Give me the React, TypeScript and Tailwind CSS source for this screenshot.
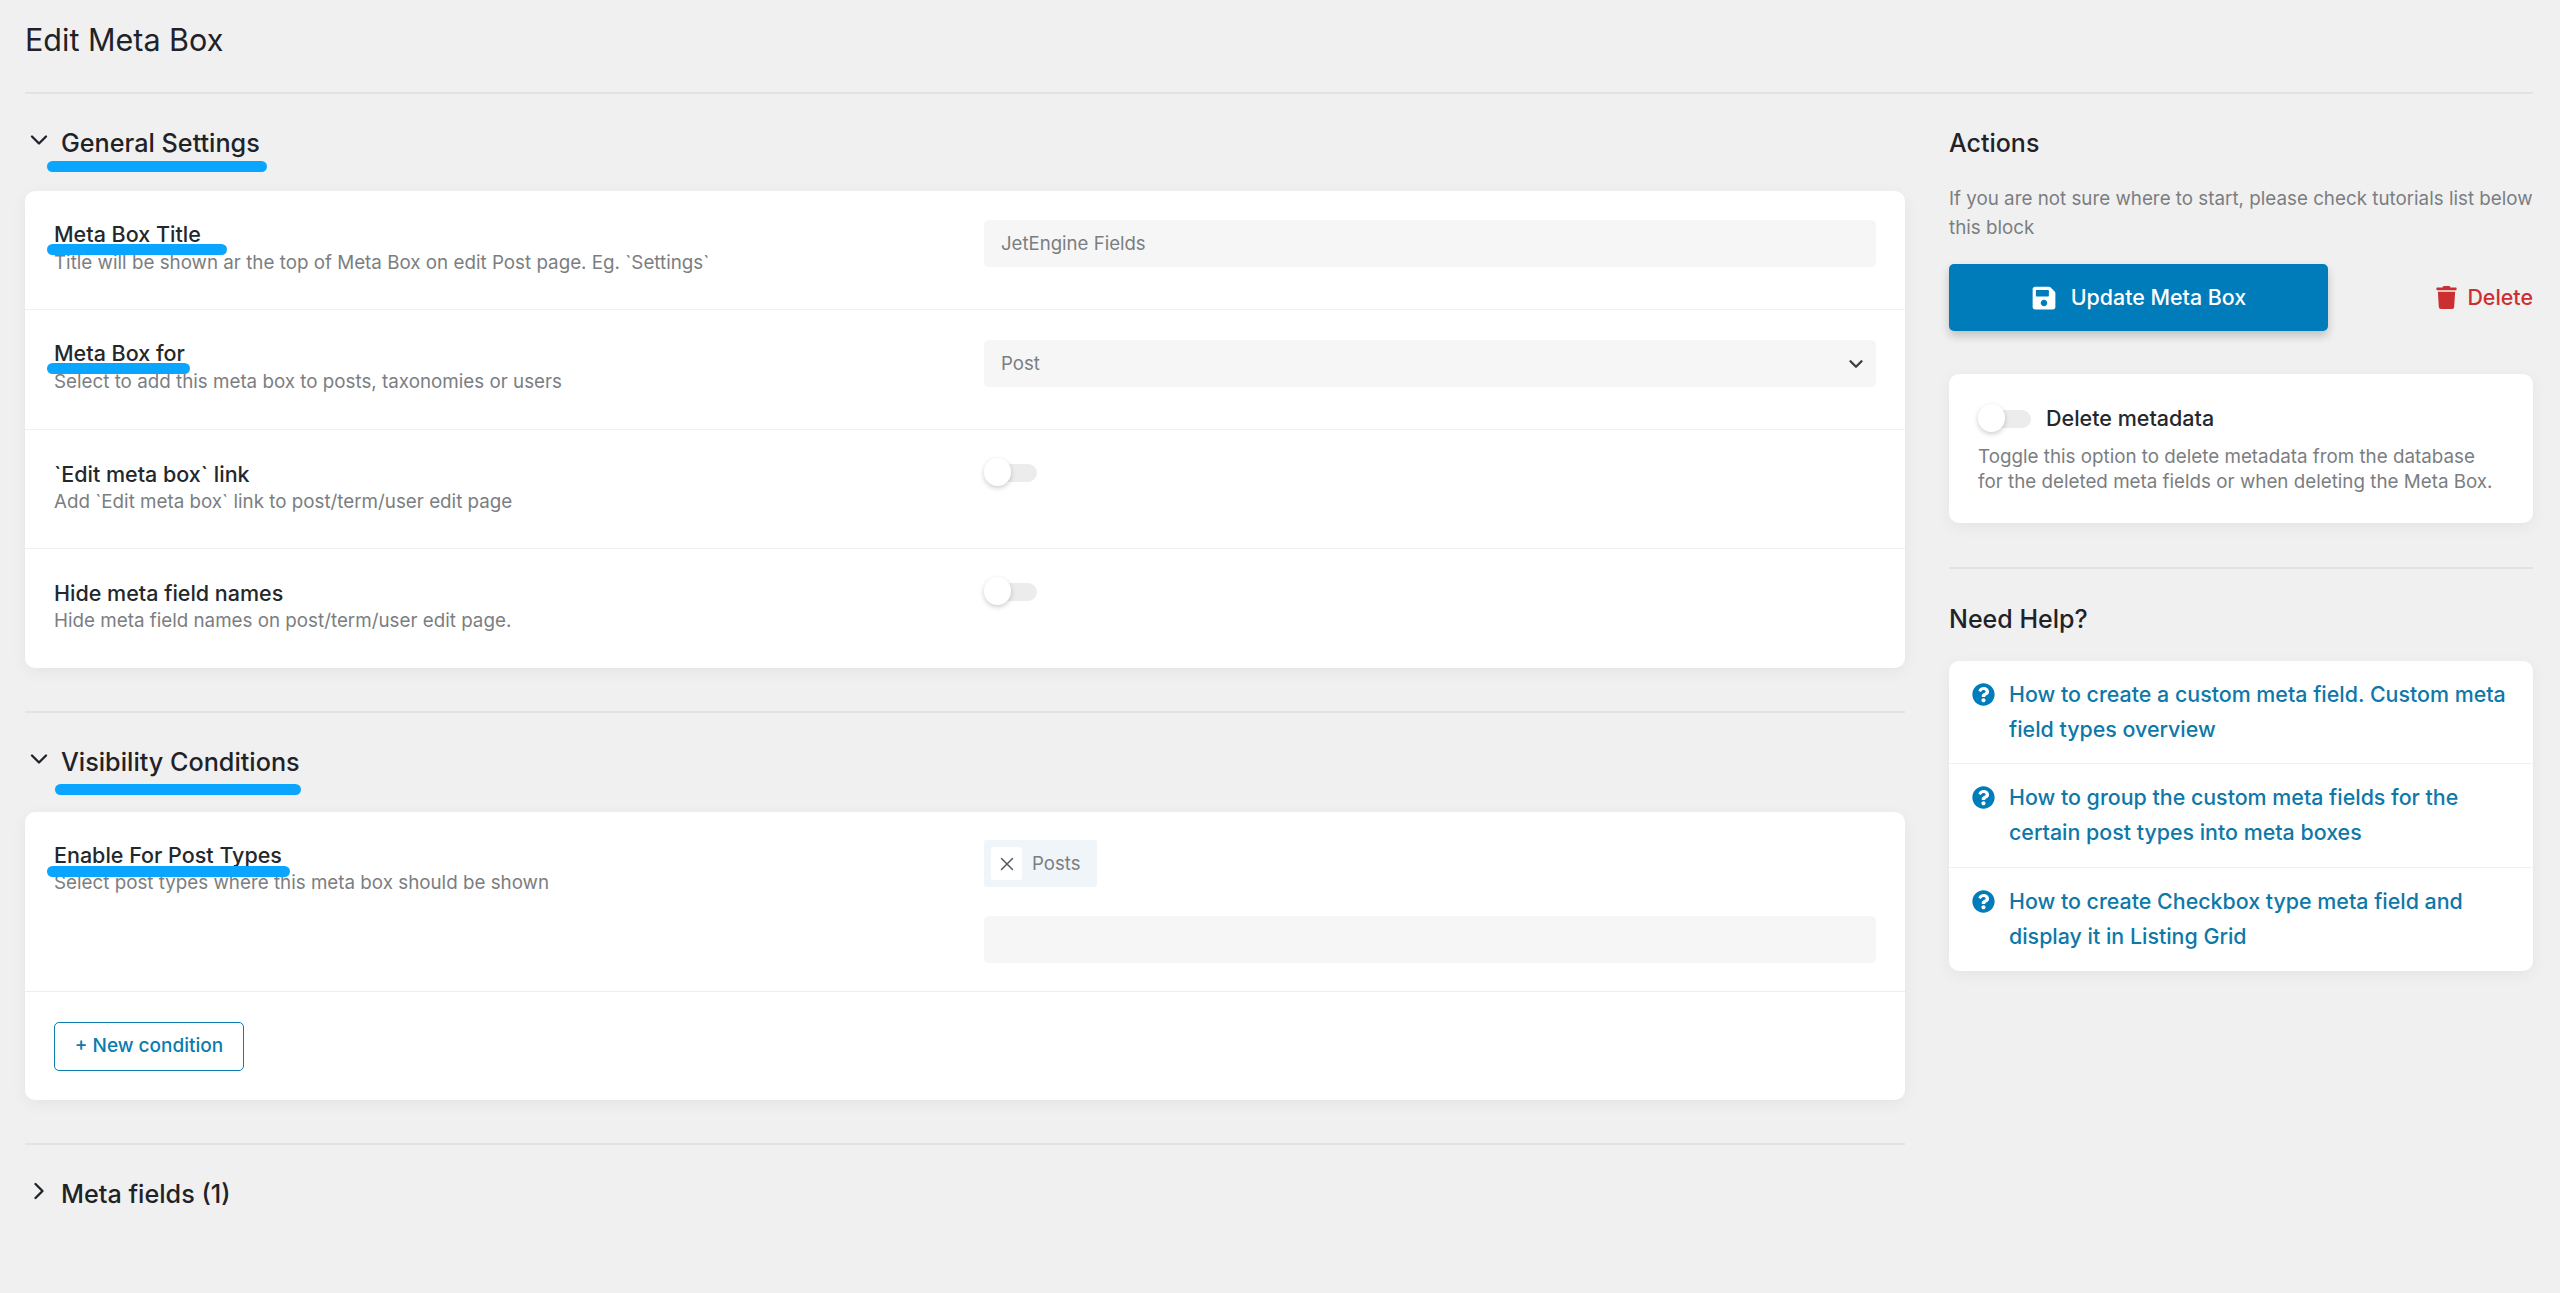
import React from 'react';
import { ChevronDown, ChevronRight, X } from 'lucide-react';
import { FaQuestionCircle, FaSave, FaTrash } from 'react-icons/fa';

const Toggle = () => (
  <div className="relative h-[28px] w-[53px]">
    <div className="absolute left-[14px] right-0 top-[6px] h-[18px] rounded-r-[9px] bg-[#ececec]" />
    <div className="absolute left-0 top-0 h-[28px] w-[27px] rounded-full bg-white shadow-[0_2px_5px_rgba(0,0,0,0.2)]" />
  </div>
);

const Mark = ({ className }: { className: string }) => (
  <div className={`absolute h-[11px] rounded-full bg-[#0aa5ff] ${className}`} />
);

const SectionHead = ({ title, open = true, children }: { title: string; open?: boolean; children?: React.ReactNode }) => (
  <div className="relative flex h-[48px] items-center text-[#1f2328]">
    <div className="flex w-[36px] justify-start">
      {open ? <ChevronDown size={28} strokeWidth={2} className="-mt-[6px]" /> : <ChevronRight size={28} strokeWidth={2} className="-mt-[6px]" />}
    </div>
    <h2 className="text-[25.2px] font-medium leading-[48px]">{title}</h2>
    {children}
  </div>
);

const Row = ({ label, desc, mark, children, last }: { label: string; desc: string; mark?: string; children?: React.ReactNode; last?: boolean }) => (
  <div className={`flex h-[119.25px] pt-[29px] ${last ? '' : 'border-b border-[#f1f1f1]'}`}>
    <div className={`w-[959px] shrink-0 pl-[29px] ${mark ? 'pt-[2px]' : 'pt-[3px]'}`}>
      <div className="relative text-[21.5px] font-medium leading-[24px] text-[#23282d]">
        {label}
        {mark && <Mark className={mark} />}
      </div>
      <p className={`text-[18.8px] leading-[24px] text-[#7b7e81] ${mark ? 'mt-[5px]' : 'mt-[4px]'}`}>{desc}</p>
    </div>
    <div className="flex-1 pr-[29px]">{children}</div>
  </div>
);

const Field = ({ value, select }: { value?: string; select?: boolean }) => (
  <div className="flex h-[47px] items-center justify-between rounded-[5px] bg-[#f6f6f6] pl-[17px] pr-[9px] text-[18.6px] text-[#7b7e81]">
    <span>{value}</span>
    {select && <ChevronDown size={22} strokeWidth={2.6} className="text-[#3c4043]" />}
  </div>
);

const helpLinks = [
  'How to create a custom meta field. Custom meta field types overview',
  'How to group the custom meta fields for the certain post types into meta boxes',
  'How to create Checkbox type meta field and display it in Listing Grid',
];

export default function App() {
  return (
    <div className="min-h-[1293px] bg-[#f0f0f1] pl-[25px] pr-[27px] font-['Inter',sans-serif]">
      <div className="h-[94px] border-b-2 border-[#e3e3e4] pt-[16px]">
        <h1 className="text-[30.5px] font-normal leading-[48px] text-[#1f2328]">Edit Meta Box</h1>
      </div>

      <div className="flex gap-[44px]">
        <div className="w-[1880px] shrink-0">
          <div className="border-b-2 border-[#e3e3e4] pb-[43px] pt-[25px]">
            <SectionHead title="General Settings">
              <Mark className="left-[22px] top-[42px] w-[220px]" />
            </SectionHead>
            <div className="mt-[24px] rounded-[10px] bg-white shadow-[0_4px_16px_rgba(0,0,0,0.05)]">
              <Row label="Meta Box Title" desc="Title will be shown ar the top of Meta Box on edit Post page. Eg. `Settings`" mark="-left-[7px] top-[22px] w-[180px]">
                <Field value="JetEngine Fields" />
              </Row>
              <Row label="Meta Box for" desc="Select to add this meta box to posts, taxonomies or users" mark="-left-[7px] top-[22px] w-[143px]">
                <div className="pt-[1px]">
                  <Field value="Post" select />
                </div>
              </Row>
              <Row label="`Edit meta box` link" desc="Add `Edit meta box` link to post/term/user edit page">
                <div className="-mt-[1px]">
                  <Toggle />
                </div>
              </Row>
              <Row label="Hide meta field names" desc="Hide meta field names on post/term/user edit page." last>
                <div className="-mt-[1px]">
                  <Toggle />
                </div>
              </Row>
            </div>
          </div>

          <div className="border-b-2 border-[#e3e3e4] pb-[43px] pt-[25px]">
            <SectionHead title="Visibility Conditions">
              <Mark className="left-[30px] top-[46px] w-[246px]" />
            </SectionHead>
            <div className="mt-[26px] rounded-[10px] bg-white shadow-[0_4px_16px_rgba(0,0,0,0.05)]">
              <div className="flex h-[180px] border-b border-[#eeeeee] pt-[28px]">
                <div className="w-[959px] shrink-0 pl-[29px] pt-[3px]">
                  <div className="relative text-[21.5px] font-medium leading-[24px] text-[#23282d]">
                    Enable For Post Types
                    <Mark className="-left-[7px] top-[23px] w-[243px]" />
                  </div>
                  <p className="mt-[4px] text-[18.8px] leading-[24px] text-[#7b7e81]">Select post types where this meta box should be shown</p>
                </div>
                <div className="flex-1 pr-[29px]">
                  <div className="flex h-[47px] w-[113px] items-center rounded-[3px] bg-[#f0f5f9] pl-[7px] text-[18.6px] text-[#7b7e81]">
                    <div className="flex h-[33px] w-[31px] items-center justify-center rounded-[3px] bg-white">
                      <X size={22} strokeWidth={1.6} className="text-[#55595d]" />
                    </div>
                    <span className="ml-[10px]">Posts</span>
                  </div>
                  <div className="mt-[29px]">
                    <Field />
                  </div>
                </div>
              </div>
              <div className="h-[108px] pl-[29px] pt-[30px]">
                <button className="flex h-[49px] w-[190px] items-center justify-center rounded-[5px] border border-[#0a7cb0] bg-white text-[19px] font-medium text-[#0a7cb0]">
                  + New condition
                </button>
              </div>
            </div>
          </div>

          <div className="pt-[25px]">
            <SectionHead title="Meta fields (1)" open={false} />
          </div>
        </div>

        <aside className="w-[584px] shrink-0">
          <h3 className="mt-[33px] text-[25px] font-medium leading-[32px] text-[#1f2328]">Actions</h3>
          <p className="mt-[25px] text-[18.8px] leading-[29px] text-[#7b7e81]">
            If you are not sure where to start, please check tutorials list below this block
          </p>
          <div className="mt-[22px] flex items-center justify-between">
            <button className="flex h-[67px] w-[379px] items-center justify-center gap-[14px] rounded-[5px] bg-[#007cba] text-[21.4px] font-medium text-white shadow-[0_5px_10px_rgba(0,0,0,0.2)]">
              <FaSave size={26} />
              Update Meta Box
            </button>
            <div className="flex items-center gap-[9px] text-[21.4px] font-medium text-[#cc2f2f]">
              <FaTrash size={23} />
              Delete
            </div>
          </div>

          <div className="mt-[43px] h-[149px] rounded-[10px] bg-white px-[29px] pt-[30px] shadow-[0_4px_16px_rgba(0,0,0,0.05)]">
            <div className="flex items-center gap-[15px]">
              <Toggle />
              <span className="text-[21.5px] font-medium leading-[28px] text-[#23282d]">Delete metadata</span>
            </div>
            <p className="mt-[12px] text-[18.8px] leading-[25px] text-[#7b7e81]">
              Toggle this option to delete metadata from the database for the deleted meta fields or when deleting the Meta Box.
            </p>
          </div>

          <div className="mt-[44px] border-t-2 border-[#e3e3e4] pt-[34px]">
            <h3 className="text-[25px] font-medium leading-[32px] text-[#1f2328]">Need Help?</h3>
            <div className="mt-[26px] rounded-[10px] bg-white shadow-[0_4px_16px_rgba(0,0,0,0.05)]">
              {helpLinks.map((link, i) => (
                <div key={link} className={`flex gap-[14px] pl-[23px] pr-[20px] pt-[16px] ${i === 1 ? 'h-[104px]' : 'h-[103px]'} ${i < 2 ? 'border-b border-[#f1f1f1]' : ''}`}>
                  <FaQuestionCircle size={23} className="mt-[6px] shrink-0 text-[#007cba]" />
                  <span className="text-[21.4px] font-medium leading-[35px] text-[#0e78a9]">{link}</span>
                </div>
              ))}
            </div>
          </div>
        </aside>
      </div>
    </div>
  );
}
